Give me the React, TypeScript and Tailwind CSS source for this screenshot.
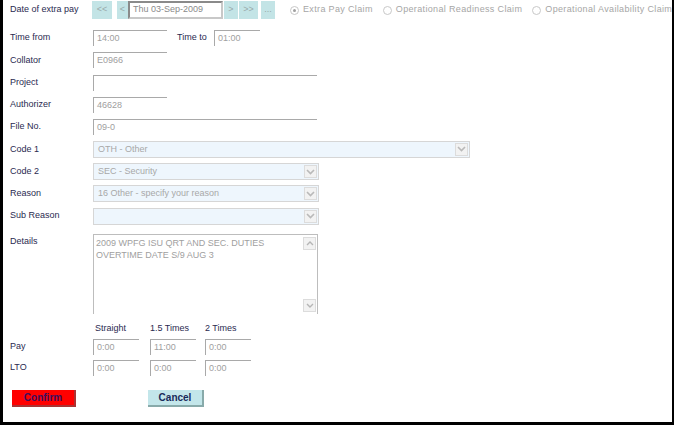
import type { ReactNode } from 'react'

const font = { fontFamily: '"Liberation Sans", Arial, sans-serif' }

function Field({ w, value, className = '' }: { w: string; value?: string; className?: string }) {
  return (
    <div
      className={`h-[16px] ${w} border-t border-l border-t-[#a9a9a9] border-l-[#a9a9a9] pl-[3px] text-[9px] leading-[15px] text-[#a0a0a0] ${className}`}
    >
      {value}
    </div>
  )
}

function Select({ w, value }: { w: string; value?: string }) {
  return (
    <div className={`flex h-[17px] ${w} border border-[#d6d6d6] bg-[#eef6fd]`}>
      <div className="flex-1 pl-[4px] text-[9px] leading-[15px] text-[#a8a8a8]">{value}</div>
      <div className="m-px flex w-[13px] items-center justify-center border border-[#dcdcdc] bg-[#f2f2f2]">
        <svg width="9" height="6" viewBox="0 0 9 6">
          <path d="M1 1l3.5 3.5L8 1" fill="none" stroke="#b9b9b9" strokeWidth="1.6" />
        </svg>
      </div>
    </div>
  )
}

function Row({ label, children }: { label: string; children: ReactNode }) {
  return (
    <div className="flex h-[22.25px] items-center">
      <div className="w-[83px] shrink-0 text-[9px] text-[#2a2a50]">{label}</div>
      {children}
    </div>
  )
}

function NavBtn({ children, w }: { children: ReactNode; w: string }) {
  return (
    <div className={`flex h-[18px] ${w} items-center justify-center bg-[#c3e4e6] text-[9px] text-[#9aa]`}>
      {children}
    </div>
  )
}

function Radio({ label, checked }: { label: string; checked?: boolean }) {
  return (
    <div className="flex shrink-0 items-center gap-[4px] whitespace-nowrap text-[9px] tracking-[0.35px] text-[#a6a6a6]">
      <div className="flex h-[9px] w-[9px] items-center justify-center rounded-full border border-[#c8c8c8]">
        {checked && <div className="h-[3px] w-[3px] rounded-full bg-[#a0a0a0]" />}
      </div>
      <span>{label}</span>
    </div>
  )
}

export default function App() {
  return (
    <div
      style={font}
      className="h-[425px] w-[674px] overflow-hidden border-b-[3px] border-l-[3px] border-r-[2px] border-black bg-white pl-[7px]"
    >
      <div className="mt-[1px] flex h-[18px] items-center">
        <div className="w-[82px] shrink-0 text-[9px] text-[#2a2a50]">Date of extra pay</div>
        <div className="flex shrink-0 items-center">
          <NavBtn w="w-[20px]">&lt;&lt;</NavBtn>
          <div className="w-[5px]" />
          <NavBtn w="w-[11px]">&lt;</NavBtn>
          <div className="flex h-[18px] w-[95px] items-center border-2 border-[#8a8a8a] border-b-[#c8c8c8] border-r-[#c8c8c8] pl-[3px] text-[9px] text-[#8a8a8a]">
            Thu 03-Sep-2009
          </div>
          <div className="w-px" />
          <NavBtn w="w-[14px]">&gt;</NavBtn>
          <div className="w-px" />
          <NavBtn w="w-[19px]">&gt;&gt;</NavBtn>
          <div className="w-[3px]" />
          <NavBtn w="w-[14px]">...</NavBtn>
        </div>
        <div className="ml-[15px] flex shrink-0 items-center gap-[10px]">
          <Radio label="Extra Pay Claim" checked />
          <Radio label="Operational Readiness Claim" />
          <Radio label="Operational Availability Claim" />
        </div>
      </div>

      <div className="mt-[8px]">
        <Row label="Time from">
          <Field w="w-[74px]" value="14:00" />
          <div className="ml-[10px] w-[37px] text-[9px] text-[#2a2a50]">Time to</div>
          <Field w="w-[46px]" value="01:00" />
        </Row>
        <Row label="Collator">
          <Field w="w-[74px]" value="E0966" />
        </Row>
        <Row label="Project">
          <Field w="w-[224px]" />
        </Row>
        <Row label="Authorizer">
          <Field w="w-[74px]" value="46628" />
        </Row>
        <Row label="File No.">
          <Field w="w-[224px]" value="09-0" />
        </Row>
        <Row label="Code 1">
          <Select w="w-[377px]" value="OTH - Other" />
        </Row>
        <Row label="Code 2">
          <Select w="w-[226px]" value="SEC - Security" />
        </Row>
        <Row label="Reason">
          <Select w="w-[226px]" value="16 Other - specify your reason" />
        </Row>
        <Row label="Sub Reason">
          <Select w="w-[226px]" />
        </Row>
      </div>

      <div className="mt-[7px] flex">
        <div className="w-[83px] shrink-0 pt-[1px] text-[9px] text-[#2a2a50]">Details</div>
        <div className="flex h-[80px] w-[225px] border border-[#bdbdbd] border-b-0">
          <div className="flex-1 pl-[2px] pt-[2px] text-[9px] leading-[12px] text-[#a0a0a0]">
            2009 WPFG ISU QRT AND SEC. DUTIES
            <br />
            OVERTIME DATE S/9 AUG 3
          </div>
          <div className="flex w-[14px] flex-col justify-between py-[2px] pr-[1px]">
            <div className="flex h-[13px] items-center justify-center border border-[#dcdcdc] bg-[#f2f2f2]">
              <svg width="8" height="5" viewBox="0 0 8 5">
                <path d="M1 4l3-3 3 3" fill="none" stroke="#b5b5b5" strokeWidth="1.4" />
              </svg>
            </div>
            <div className="flex h-[13px] items-center justify-center border border-[#dcdcdc] bg-[#f2f2f2]">
              <svg width="8" height="5" viewBox="0 0 8 5">
                <path d="M1 1l3 3 3-3" fill="none" stroke="#b5b5b5" strokeWidth="1.4" />
              </svg>
            </div>
          </div>
        </div>
      </div>

      <div className="mt-[6px] flex h-[16px] items-center pl-[85px] text-[9px] text-[#2a2a50]">
        <div className="w-[55px]">Straight</div>
        <div className="w-[55px]">1.5 Times</div>
        <div>2 Times</div>
      </div>
      <div className="flex h-[21px] items-center">
        <div className="w-[83px] shrink-0 text-[9px] text-[#2a2a50]">Pay</div>
        <Field w="w-[46px]" value="0:00" />
        <Field w="w-[46px]" value="11:00" className="ml-[11px]" />
        <Field w="w-[46px]" value="0:00" className="ml-[9px]" />
      </div>
      <div className="flex h-[21px] items-center">
        <div className="w-[83px] shrink-0 text-[9px] text-[#2a2a50]">LTO</div>
        <Field w="w-[46px]" value="0:00" />
        <Field w="w-[46px]" value="0:00" className="ml-[11px]" />
        <Field w="w-[46px]" value="0:00" className="ml-[9px]" />
      </div>

      <div className="mt-[12px] flex items-center">
        <button className="ml-[2px] h-[17px] w-[64px] border-b-2 border-r-2 border-[#a33] bg-[#ff0000] text-[10px] font-bold text-[#3a1060]">
          Confirm
        </button>
        <button className="ml-[72px] h-[17px] w-[56px] border-b-2 border-r-2 border-[#8aa] bg-[#c3e6ea] text-[10px] font-bold text-[#1a2a5a]">
          Cancel
        </button>
      </div>
    </div>
  )
}
